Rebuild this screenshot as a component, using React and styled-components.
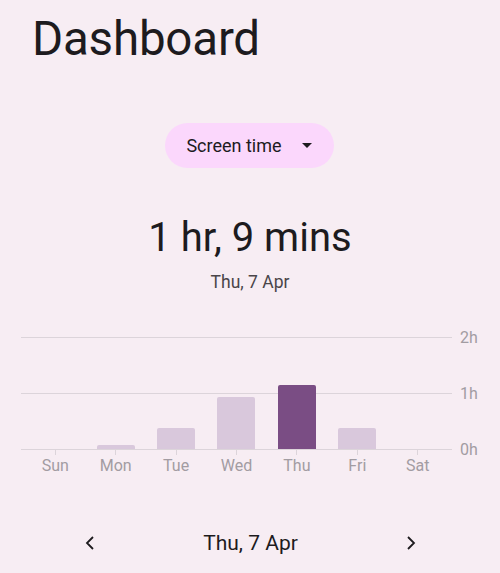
import React from 'react'
import styled, { createGlobalStyle } from 'styled-components'

const GlobalStyle = createGlobalStyle`
  html, body {
    margin: 0;
    padding: 0;
    background: #f7edf3;
  }
  body {
    font-family: Roboto, "Noto Sans", sans-serif;
    color: #1d1b1e;
  }
`

const days = [
  { name: 'Sun', hours: 0 },
  { name: 'Mon', hours: 0.07 },
  { name: 'Tue', hours: 0.375 },
  { name: 'Wed', hours: 0.93 },
  { name: 'Thu', hours: 1.14, active: true },
  { name: 'Fri', hours: 0.375 },
  { name: 'Sat', hours: 0 },
]

const HOUR = 56

function App() {
  return (
    <Page>
      <GlobalStyle />
      <Title>Dashboard</Title>
      <PillRow>
        <Pill>
          Screen time
          <svg width="10" height="6" viewBox="0 0 10 6">
            <path d="M0 0 L10 0 L5 5 Z" fill="#1d1b1e" />
          </svg>
        </Pill>
      </PillRow>
      <Total>1 hr, 9 mins</Total>
      <SubDate>Thu, 7 Apr</SubDate>

      <Chart>
        <Plot>
          <GridLine />
          <GridLine />
          <Bars>
            {days.map(d => (
              <Column key={d.name}>
                <Bar $active={d.active} style={{ height: d.hours * HOUR }} />
              </Column>
            ))}
          </Bars>
          <DayRow>
            {days.map(d => (
              <Day key={d.name}>
                <Tick />
                {d.name}
              </Day>
            ))}
          </DayRow>
        </Plot>
        <Axis>
          <span>2h</span>
          <span>1h</span>
          <span>0h</span>
        </Axis>
      </Chart>

      <Nav>
        <NavButton aria-label="previous">
          <svg width="10" height="16" viewBox="0 0 10 16">
            <path d="M8 2 L2 8 L8 14" fill="none" stroke="#1d1b1e" strokeWidth="1.8" />
          </svg>
        </NavButton>
        <NavDate>Thu, 7 Apr</NavDate>
        <NavButton aria-label="next">
          <svg width="10" height="16" viewBox="0 0 10 16">
            <path d="M2 2 L8 8 L2 14" fill="none" stroke="#1d1b1e" strokeWidth="1.8" />
          </svg>
        </NavButton>
      </Nav>
    </Page>
  )
}

export default App

const Page = styled.div`
  width: 500px;
  height: 573px;
  overflow: hidden;
  display: flex;
  flex-direction: column;
`

const Title = styled.h1`
  margin: 11px 0 0 32px;
  font-size: 47.5px;
  font-weight: 400;
  letter-spacing: -0.2px;
  line-height: 56px;
`

const PillRow = styled.div`
  display: flex;
  justify-content: center;
  margin-top: 56px;
`

const Pill = styled.button`
  display: flex;
  align-items: center;
  gap: 20px;
  height: 45px;
  padding: 0 22px 0 21px;
  border: none;
  border-radius: 23px;
  background: #fbd7fc;
  font-family: Roboto, sans-serif;
  font-size: 18px;
  color: #1d1b1e;
  margin-left: -1px;
`

const Total = styled.div`
  margin-top: 47px;
  text-align: center;
  font-size: 40px;
  line-height: 46px;
`

const SubDate = styled.div`
  margin-top: 11px;
  text-align: center;
  font-size: 17.5px;
  color: #4a4549;
`

const Chart = styled.div`
  display: flex;
  margin-top: 45px;
  padding-left: 21px;
`

const Plot = styled.div`
  position: relative;
  width: 431px;
  display: flex;
  flex-direction: column;
`

const GridLine = styled.div`
  height: 56px;
  border-top: 1px solid #dcd4da;
  box-sizing: border-box;
`

const Bars = styled.div`
  position: absolute;
  left: 0;
  right: 0;
  top: 0;
  height: 112px;
  display: flex;
  padding: 0 4px;
  align-items: flex-end;
  border-bottom: 1px solid #dcd4da;
`

const Column = styled.div`
  flex: 1;
  display: flex;
  justify-content: center;
  align-items: flex-end;
`

const Bar = styled.div`
  width: 38px;
  border-radius: 2px 2px 0 0;
  background: ${p => (p.$active ? '#7a4d84' : '#d9c8dc')};
`

const DayRow = styled.div`
  display: flex;
  padding: 0 4px;
  margin-top: 1px;
`

const Day = styled.div`
  flex: 1;
  display: flex;
  flex-direction: column;
  align-items: center;
  font-size: 16px;
  color: #a29ca2;
`

const Tick = styled.div`
  width: 1px;
  height: 5px;
  background: #dcd4da;
  margin-bottom: 1px;
`

const Axis = styled.div`
  display: flex;
  flex-direction: column;
  justify-content: space-between;
  height: 131px;
  margin-top: -9px;
  padding-left: 8px;
  font-size: 16px;
  color: #a29ca2;
`

const Nav = styled.div`
  display: flex;
  align-items: center;
  justify-content: space-between;
  margin-top: 56px;
  padding: 0 82px 0 83px;
`

const NavButton = styled.button`
  border: none;
  background: none;
  padding: 0;
  width: 14px;
  display: flex;
  justify-content: center;
`

const NavDate = styled.div`
  font-size: 21px;
  color: #1d1b1e;
`
